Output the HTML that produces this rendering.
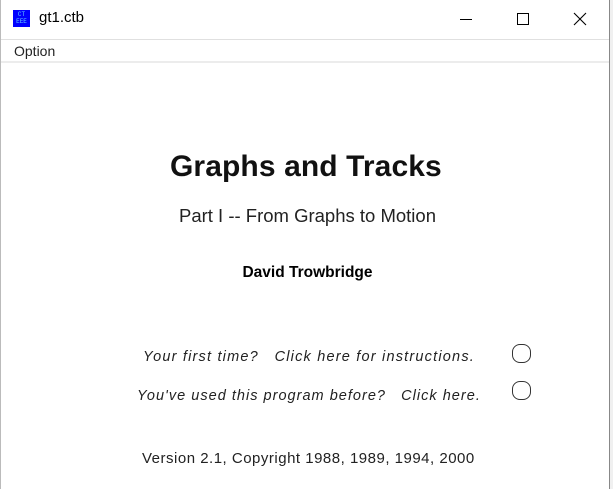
<!DOCTYPE html>
<html><head><meta charset="utf-8"><style>
*{margin:0;padding:0;box-sizing:border-box}
body{width:613px;height:489px;overflow:hidden;background:#fff;font-family:"Liberation Sans",sans-serif;position:relative}
.win{position:absolute;left:0;top:0;width:609px;height:489px;background:#fff;border-left:1px solid #bbb}
.right{position:absolute;left:609px;top:0;width:4px;height:489px;background:#f0f0f0;border-left:1px solid #888}
.t{position:absolute;white-space:nowrap;color:#000}
.c{position:absolute;left:0;width:613px;text-align:center}
.rb{position:absolute;width:19px;height:19px;border:1.5px solid #333;border-radius:8px}
</style></head><body>
<div class="win">
 <div style="position:absolute;left:12px;top:10px;width:17px;height:17px;background:#0000ff;color:#6cf;font-size:6px;font-family:'Liberation Mono';line-height:7px;text-align:center;padding-top:1px">CT<br>EEE</div>
 <div class="t" style="left:38px;top:9px;font-size:15px">gt1.ctb</div>
 <div style="position:absolute;left:459px;top:19px;width:12px;height:1px;background:#000"></div>
 <div style="position:absolute;left:516px;top:13px;width:12px;height:12px;border:1px solid #000"></div>
 <svg style="position:absolute;left:572px;top:12px" width="14" height="14"><path d="M1 1L13 13M13 1L1 13" stroke="#000" stroke-width="1.1"/></svg>
 <div style="position:absolute;left:0;top:39px;width:609px;height:1px;background:#e0e0e0"></div>
 <div class="t" style="left:13px;top:43px;font-size:14px;color:#222">Option</div>
 <div style="position:absolute;left:0;top:61px;width:609px;height:2px;background:#ececec"></div>
 <div class="t" style="left:169px;top:150px;font-size:30px;font-weight:bold;color:#111;letter-spacing:0.1px">Graphs and Tracks</div>
 <div class="c t" style="top:205px;font-size:18.5px;color:#222">Part I -- From Graphs to Motion</div>
 <div class="c t" style="top:264px;font-size:15.5px;font-weight:bold">David Trowbridge</div>
 <div class="t" style="left:142px;top:349px;font-size:14.5px;font-style:italic;color:#222;letter-spacing:1.2px">Your first time?&nbsp;&nbsp; Click here for instructions.</div>
 <div class="t" style="left:136px;top:388px;font-size:14.5px;font-style:italic;color:#222;letter-spacing:1.02px">You've used this program before?&nbsp;&nbsp; Click here.</div>
 <div class="rb" style="left:511px;top:344px"></div>
 <div class="rb" style="left:511px;top:381px"></div>
 <div class="t" style="left:141px;top:450px;font-size:15px;color:#222;letter-spacing:0.5px">Version 2.1, Copyright 1988, 1989, 1994, 2000</div>
</div>
<div class="right"></div>
</body></html>
